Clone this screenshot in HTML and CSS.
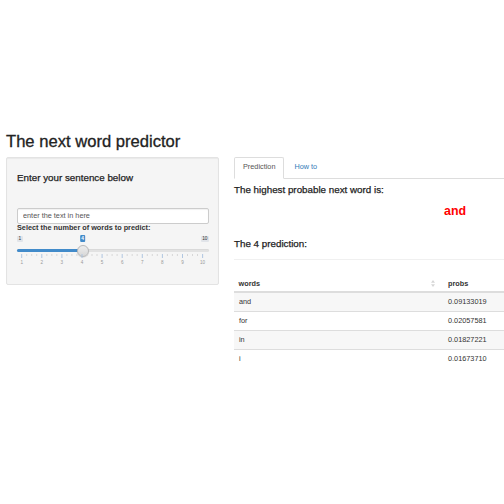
FILE: index.html
```html
<!DOCTYPE html>
<html>
<head>
<meta charset="utf-8">
<link rel="stylesheet" href="styles.css">
</head>
<body>
<div class="page">
  <h2 class="title">The next word predictor</h2>
  <div class="row">
    <div class="well">
      <h4 class="well-head">Enter your sentence below</h4>
      <input class="text-input" type="text" value="enter the text in here">
      <label class="slider-label">Select the number of words to predict:</label>
      <div class="slider">
        <span class="val val-min">1</span>
        <span class="val val-max">10</span>
        <span class="val val-cur" style="left:65.5px">4</span>
        <div class="track"><div class="fill" style="width:65.5px"></div></div>
        <div class="handle" style="left:59.5px"></div>
        <svg class="grid" width="192" height="12" viewBox="0 0 192 12">
          <g stroke="#cfcfcf" stroke-width="0.8">
            <path d="M9.7 0v2M14.7 0v2M19.7 0v2M29.8 0v2M34.8 0v2M39.8 0v2M49.9 0v2M54.9 0v2M59.9 0v2M70 0v2M75 0v2M80 0v2M90.1 0v2M95.1 0v2M100.1 0v2M110.2 0v2M115.2 0v2M120.2 0v2M130.3 0v2M135.3 0v2M140.3 0v2M150.4 0v2M155.4 0v2M160.4 0v2M170.5 0v2M175.5 0v2M180.5 0v2"/>
          </g>
          <g stroke="#a9c2df" stroke-width="0.9">
            <path d="M4.7 0v4M24.8 0v4M44.9 0v4M65 0v4M85.1 0v4M105.2 0v4M125.3 0v4M145.4 0v4M165.5 0v4M185.6 0v4"/>
          </g>
          <g fill="#999" font-family="Liberation Sans, Arial, sans-serif" font-size="4.6" text-anchor="middle">
            <text x="4.7" y="9.6">1</text>
            <text x="24.8" y="9.6">2</text>
            <text x="44.9" y="9.6">3</text>
            <text x="65" y="9.6">4</text>
            <text x="85.1" y="9.6">5</text>
            <text x="105.2" y="9.6">6</text>
            <text x="125.3" y="9.6">7</text>
            <text x="145.4" y="9.6">8</text>
            <text x="165.5" y="9.6">9</text>
            <text x="185.6" y="9.6">10</text>
          </g>
        </svg>
      </div>
    </div>
    <div class="main">
      <ul class="tabs">
        <li class="tab active">Prediction</li>
        <li class="tab link">How to</li>
      </ul>
      <h4 class="main-head">The highest probable next word is:</h4>
      <h3 class="answer">and</h3>
      <h4 class="main-head second">The 4 prediction:</h4>
      <div class="dt-wrap">
        <table class="dt">
          <colgroup><col class="c1"><col></colgroup>
          <thead>
            <tr>
              <th>words<svg class="sort" width="4" height="7" viewBox="0 0 4 7"><path d="M2 0L4 2.8H0z M2 7L0 4.2H4z" fill="#d6d6d6"/></svg></th>
              <th>probs</th>
            </tr>
          </thead>
          <tbody>
            <tr class="odd"><td>and</td><td>0.09133019</td></tr>
            <tr><td>for</td><td>0.02057581</td></tr>
            <tr class="odd"><td>in</td><td>0.01827221</td></tr>
            <tr><td>i</td><td>0.01673710</td></tr>
          </tbody>
        </table>
      </div>
    </div>
  </div>
</div>
</body>
</html>
```

FILE: styles.css
```css
html, body {
  margin: 0;
  padding: 0;
  background: #fff;
  overflow: hidden;
}
body {
  font-family: "Liberation Sans", Arial, Helvetica, sans-serif;
  color: #333;
}
.page {
  padding: 133px 0 0 6px;
}
.title {
  margin: 0 0 6px 0;
  font-size: 16.6px;
  line-height: 18px;
  font-weight: normal;
  color: #222;
  -webkit-text-stroke: 0.3px #222;
}
.row {
  display: flex;
  gap: 15px;
  align-items: flex-start;
}
.well {
  width: 213px;
  height: 128px;
  box-sizing: border-box;
  background: #f5f5f5;
  border: 1px solid #e3e3e3;
  border-radius: 2px;
  box-shadow: inset 0 1px 1px rgba(0,0,0,0.05);
  padding: 13.6px 9px 0 10px;
  display: flex;
  flex-direction: column;
}
.well-head, .main-head {
  margin: 0;
  font-size: 9.8px;
  line-height: 11px;
  font-weight: normal;
  color: #222;
  -webkit-text-stroke: 0.25px #222;
}
.well-head {
  margin-bottom: 25.4px;
}
.text-input {
  width: 192px;
  height: 16px;
  box-sizing: border-box;
  margin: 0;
  border: 1px solid #ccc;
  border-radius: 2px;
  background: #fff;
  padding: 0 5px;
  font-family: "Liberation Sans", Arial, sans-serif;
  font-size: 7.3px;
  color: #555;
  box-shadow: inset 0 1px 1px rgba(0,0,0,0.06);
  outline: none;
}
.slider-label {
  display: block;
  font-size: 7.3px;
  line-height: 8px;
  font-weight: bold;
  color: #333;
  margin-top: 0;
}
.slider {
  position: relative;
  width: 192px;
  height: 31px;
  margin-top: 3px;
}
.val {
  position: absolute;
  top: 1px;
  height: 6px;
  line-height: 6px;
  font-size: 4.8px;
  padding: 0 1.5px;
  border-radius: 1px;
  background: #e1e4e9;
  color: #333;
}
.val-min { left: 0; }
.val-max { right: 0; }
.val-cur {
  top: 0;
  height: 7px;
  line-height: 7px;
  background: #428bca;
  color: #fff;
  font-weight: bold;
  transform: translateX(-50%);
}
.track {
  position: absolute;
  left: 0;
  right: 0;
  top: 14.5px;
  height: 3px;
  border-radius: 2px;
  background: #e2e2e2;
  box-shadow: inset 0 0.5px 0.5px rgba(0,0,0,0.08);
}
.fill {
  height: 100%;
  border-radius: 2px 0 0 2px;
  background: #428bca;
}
.handle {
  position: absolute;
  top: 10px;
  width: 12px;
  height: 12px;
  box-sizing: border-box;
  border-radius: 50%;
  border: 1px solid #b9b9b9;
  background: linear-gradient(#ededed, #d7d7d7);
  box-shadow: 0 0.5px 1px rgba(0,0,0,0.15);
}
.grid {
  position: absolute;
  left: 0;
  top: 19px;
  display: block;
}
.main {
  flex: 1;
  min-width: 0;
}
.tabs {
  list-style: none;
  margin: 0;
  padding: 0;
  display: flex;
  border-bottom: 1px solid #ddd;
}
.tab {
  font-size: 7.3px;
  line-height: 10px;
  padding: 4px 8px 6px 8px;
  margin-right: 1px;
  margin-bottom: -1px;
  border: 1px solid transparent;
  border-radius: 2px 2px 0 0;
}
.tab.active {
  border-color: #ddd;
  border-bottom-color: #fff;
  background: #fff;
  color: #555;
}
.tab.link {
  color: #337ab7;
}
.main-head {
  margin-top: 4.6px;
}
.answer {
  margin: 9.5px 0 0 0;
  padding-left: 210px;
  font-size: 12.4px;
  line-height: 14px;
  font-weight: bold;
  color: #f00;
}
.main-head.second {
  margin-top: 19.5px;
}
.dt-wrap {
  margin-top: 10.4px;
  border-top: 1px solid #f0f0f0;
  padding-top: 12px;
}
.dt {
  width: 100%;
  table-layout: fixed;
  border-collapse: collapse;
  font-size: 7.3px;
  line-height: 9px;
}
.dt .c1 { width: 209px; }
.dt th {
  text-align: left;
  font-weight: bold;
  color: #333;
  padding: 7px 5px 3px 5px;
  border-bottom: 2px solid #ddd;
  white-space: nowrap;
}
.dt th:first-child {
  padding-left: 4.5px;
}
.sort {
  float: right;
  margin: 1px 3px 0 0;
}
.dt td {
  padding: 4.5px 5px;
  color: #333;
  border-top: 1px solid #ddd;
  white-space: nowrap;
}
.dt tbody tr:first-child td {
  border-top: none;
}
.dt tr.odd td {
  background: #f7f7f7;
}
```
